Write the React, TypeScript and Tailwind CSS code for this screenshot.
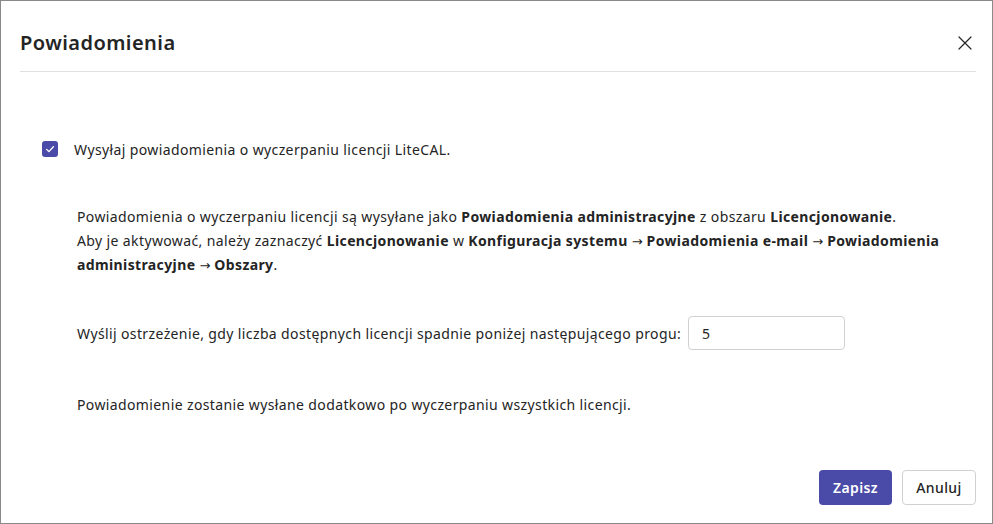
import { useState } from "react";

function CheckIcon() {
    return (
        <svg viewBox="0 0 16 16" className="w-3 h-3" fill="none" stroke="white" strokeWidth="1.8" strokeLinecap="round" strokeLinejoin="round">
            <path d="M3.5 8.5l3 3 6-6.5" />
        </svg>
    );
}

function CloseIcon() {
    return (
        <svg viewBox="0 0 14 14" className="w-[14px] h-[14px]" fill="none" stroke="#242424" strokeWidth="1.2" strokeLinecap="round">
            <path d="M1 1l12 12M13 1L1 13" />
        </svg>
    );
}

// menu path separator, drawn with a font that has a full-size arrow
function Arrow() {
    return <span className="font-['DejaVu_Sans',sans-serif] font-normal tracking-normal text-[13px] leading-none">→</span>;
}

export default function App() {
    const [enabled, setEnabled] = useState(true);
    const [threshold, setThreshold] = useState("5");

    return (
        <div className="w-[993px] h-[524px] bg-white border border-[#8a8a8a] flex flex-col text-[#242424] text-[14px] tracking-[0.38px] font-['Noto_Sans',sans-serif]">
            {/* Header */}
            <div className="ml-[19px] mr-[16px] h-[71px] pt-[14px] flex items-center justify-between border-b border-[#e0e0e0]">
                <h1 className="text-[20px] font-semibold leading-7 tracking-[0.45px]">Powiadomienia</h1>
                <button className="w-7 h-7 -mr-[3px] flex items-center justify-center rounded hover:bg-gray-100">
                    <CloseIcon />
                </button>
            </div>

            {/* Body */}
            <div className="ml-[19px] mr-[16px] flex flex-col">
                <label className="mt-[67px] h-5 flex items-center gap-[16px] pl-[22px] cursor-pointer" onClick={() => setEnabled(!enabled)}>
                    <span
                        className={
                            enabled
                                ? "w-4 h-4 rounded-[3px] bg-[#4a4aa8] flex items-center justify-center"
                                : "w-4 h-4 rounded-[3px] border border-[#616161] bg-white"
                        }
                    >
                        {enabled && <CheckIcon />}
                    </span>
                    <span>Wysyłaj powiadomienia o wyczerpaniu licencji LiteCAL.</span>
                </label>

                <div className="pl-[57px]">
                    <p className="mt-[46px] leading-6">
                        Powiadomienia o wyczerpaniu licencji są wysyłane jako <b>Powiadomienia administracyjne</b> z obszaru <b>Licencjonowanie</b>.
                        <br />
                        Aby je aktywować, należy zaznaczyć <b>Licencjonowanie</b> w{" "}
                        <b>
                            Konfiguracja systemu <Arrow /> Powiadomienia e-mail <Arrow /> Powiadomienia
                        </b>
                        <br />
                        <b>
                            administracyjne <Arrow /> Obszary
                        </b>
                        .
                    </p>

                    <div className="mt-[39px] h-[34px] flex items-center gap-[7px]">
                        <span>Wyślij ostrzeżenie, gdy liczba dostępnych licencji spadnie poniżej następującego progu:</span>
                        <input
                            value={threshold}
                            onChange={(e) => setThreshold(e.target.value)}
                            className="w-[157px] h-[34px] px-[13px] border border-[#d1d1d1] rounded-[4px] outline-none"
                        />
                    </div>

                    <p className="mt-[43px] leading-6">Powiadomienie zostanie wysłane dodatkowo po wyczerpaniu wszystkich licencji.</p>
                </div>
            </div>

            {/* Footer */}
            <div className="mt-auto pr-[16px] pb-[18px] flex justify-end gap-[10px]">
                <button className="w-[73px] h-[35px] rounded-[4px] bg-[#4a4aa8] text-white font-semibold">Zapisz</button>
                <button className="w-[74px] h-[35px] rounded-[4px] border border-[#d1d1d1] bg-white font-medium">Anuluj</button>
            </div>
        </div>
    );
}
